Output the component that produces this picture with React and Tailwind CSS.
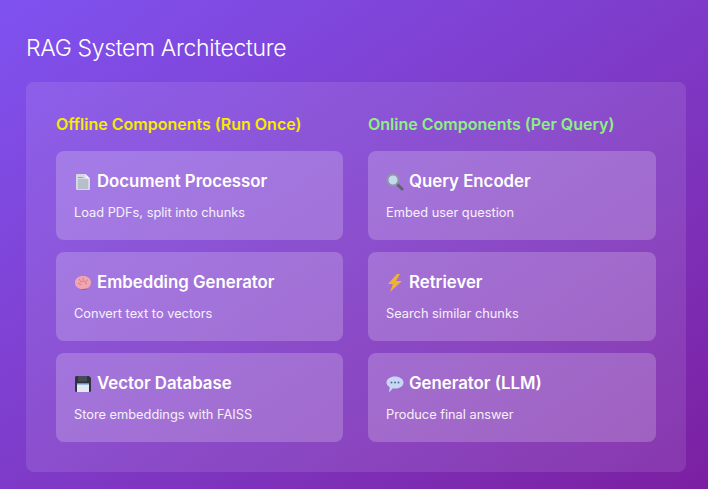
const DocIcon = () => (
  <svg width="16" height="18" viewBox="0 0 16 18" className="shrink-0">
    <path d="M2 1h8.500L15 5.500V16a1 1 0 0 1-1 1H2a1 1 0 0 1-1-1V2a1 1 0 0 1 1-1z" fill="#d5d9e4" />
    <path d="M10.500 1 15 5.500h-3.500a1 1 0 0 1-1-1z" fill="#f2f3f7" />
    <path d="M3 4.500h5M3 7h10M3 9h10M3 11h10M3 13h10M3 15h10" stroke="#9aa3b2" strokeWidth="1" />
  </svg>
)

const BrainIcon = () => (
  <svg width="18" height="16" viewBox="0 0 18 16" className="shrink-0">
    <path d="M6 13.500c2 2 6 2 8 0z" fill="#e4465e" />
    <path d="M1 7.500C1 3.500 4.500 1 9 1s8 2.500 8 6.500c0 3.500-2.500 6-5 6-1.500 0-2 .5-3.500.5C4 14 1 11.500 1 7.500z" fill="#f0a6b2" />
    <path d="M5 4c1.500 1 .5 2.500 2 3s2-2 3.500-1 .5 3 2.500 3M4 8.500c1.500-.5 2 1.500 3.500 1M9 2.500c-.5 1 0 2 1 2.500M13.500 4.500c-.5 1-.5 1.500-1.500 2" fill="none" stroke="#d96f80" strokeWidth=".9" />
  </svg>
)

const SaveIcon = () => (
  <svg width="18" height="18" viewBox="0 0 18 18" className="shrink-0">
    <path d="M2.500 1H15l2 2v12.500a1.500 1.500 0 0 1-1.500 1.500h-13A1.500 1.500 0 0 1 1 15.500v-13A1.500 1.500 0 0 1 2.500 1z" fill="#2e3340" />
    <rect x="3" y="8" width="12" height="9" fill="#e4e8f1" />
    <rect x="3" y="8" width="12" height="1.500" fill="#5b8fd8" />
    <rect x="4" y="1" width="9" height="5.500" fill="#454b59" />
  </svg>
)

const SearchIcon = () => (
  <svg width="18" height="18" viewBox="0 0 18 18" className="shrink-0">
    <path d="m11 11 5 5" stroke="#5f6470" strokeWidth="3" strokeLinecap="round" />
    <circle cx="7" cy="7" r="5.500" fill="#c5d9ee" stroke="#8f96a6" strokeWidth="2" />
  </svg>
)

const BoltIcon = () => (
  <svg width="16" height="18" viewBox="0 0 16 18" className="shrink-0">
    <path d="M10 0 1 10h5l-3 8 12-11H9l4-7z" fill="#f0b429" />
  </svg>
)

const ChatIcon = () => (
  <svg width="18" height="17" viewBox="0 0 18 17" className="shrink-0">
    <path d="M9 .5c4.500 0 8.500 2.500 8.500 6S14 12.500 9.500 12.500c-1 0-1.500 0-2.500-.2L3 16.500l.8-5.200C1.800 10.200.500 8.500.500 6.500.500 3 4.500.5 9 .5z" fill="#c7d7f5" />
    <circle cx="5.500" cy="6.500" r="1" fill="#5a6a9a" />
    <circle cx="9" cy="6.500" r="1" fill="#5a6a9a" />
    <circle cx="12.500" cy="6.500" r="1" fill="#5a6a9a" />
  </svg>
)

function Card({ icon, title, text }) {
  return (
    <div className="h-[89px] rounded-lg bg-white/20 px-[18px] pt-[20px]">
      <h3 className="flex h-[22px] items-center gap-[5px] text-[16.800px] font-semibold text-white">
        <span className="flex w-[18px] justify-center">{icon}</span>
        <span>{title}</span>
      </h3>
      <p className="mt-[10px] text-[12.800px] leading-[20px] text-white/90">{text}</p>
    </div>
  )
}

const offline = [
  { icon: <DocIcon />, title: 'Document Processor', text: 'Load PDFs, split into chunks' },
  { icon: <BrainIcon />, title: 'Embedding Generator', text: 'Convert text to vectors' },
  { icon: <SaveIcon />, title: 'Vector Database', text: 'Store embeddings with FAISS' },
]

const online = [
  { icon: <SearchIcon />, title: 'Query Encoder', text: 'Embed user question' },
  { icon: <BoltIcon />, title: 'Retriever', text: 'Search similar chunks' },
  { icon: <ChatIcon />, title: 'Generator (LLM)', text: 'Produce final answer' },
]

function Column({ title, color, items }) {
  return (
    <div>
      <h2 className={`mb-[15px] h-[24px] text-[16px] font-semibold leading-[24px] ${color}`}>{title}</h2>
      <div className="flex flex-col gap-3">
        {items.map(item => <Card key={item.title} {...item} />)}
      </div>
    </div>
  )
}

export default function App() {
  return (
    <div className="h-[489px] w-[708px] overflow-hidden bg-gradient-to-br from-[#7f52f0] to-[#7b1fa2] pl-[26px] pr-[22px] pt-[32px] font-['Inter','Noto_Sans',sans-serif]">
      <h1 className="mb-[18px] h-[32px] text-[23px] font-light leading-[32px] tracking-[-0.35px] text-white">RAG System Architecture</h1>
      <div className="rounded-lg bg-white/10 p-[30px]">
        <div className="grid grid-cols-[287px_288px] gap-[25px]">
          <Column title="Offline Components (Run Once)" color="text-[#f5ec00]" items={offline} />
          <Column title="Online Components (Per Query)" color="text-[#8cf084]" items={online} />
        </div>
      </div>
    </div>
  )
}
